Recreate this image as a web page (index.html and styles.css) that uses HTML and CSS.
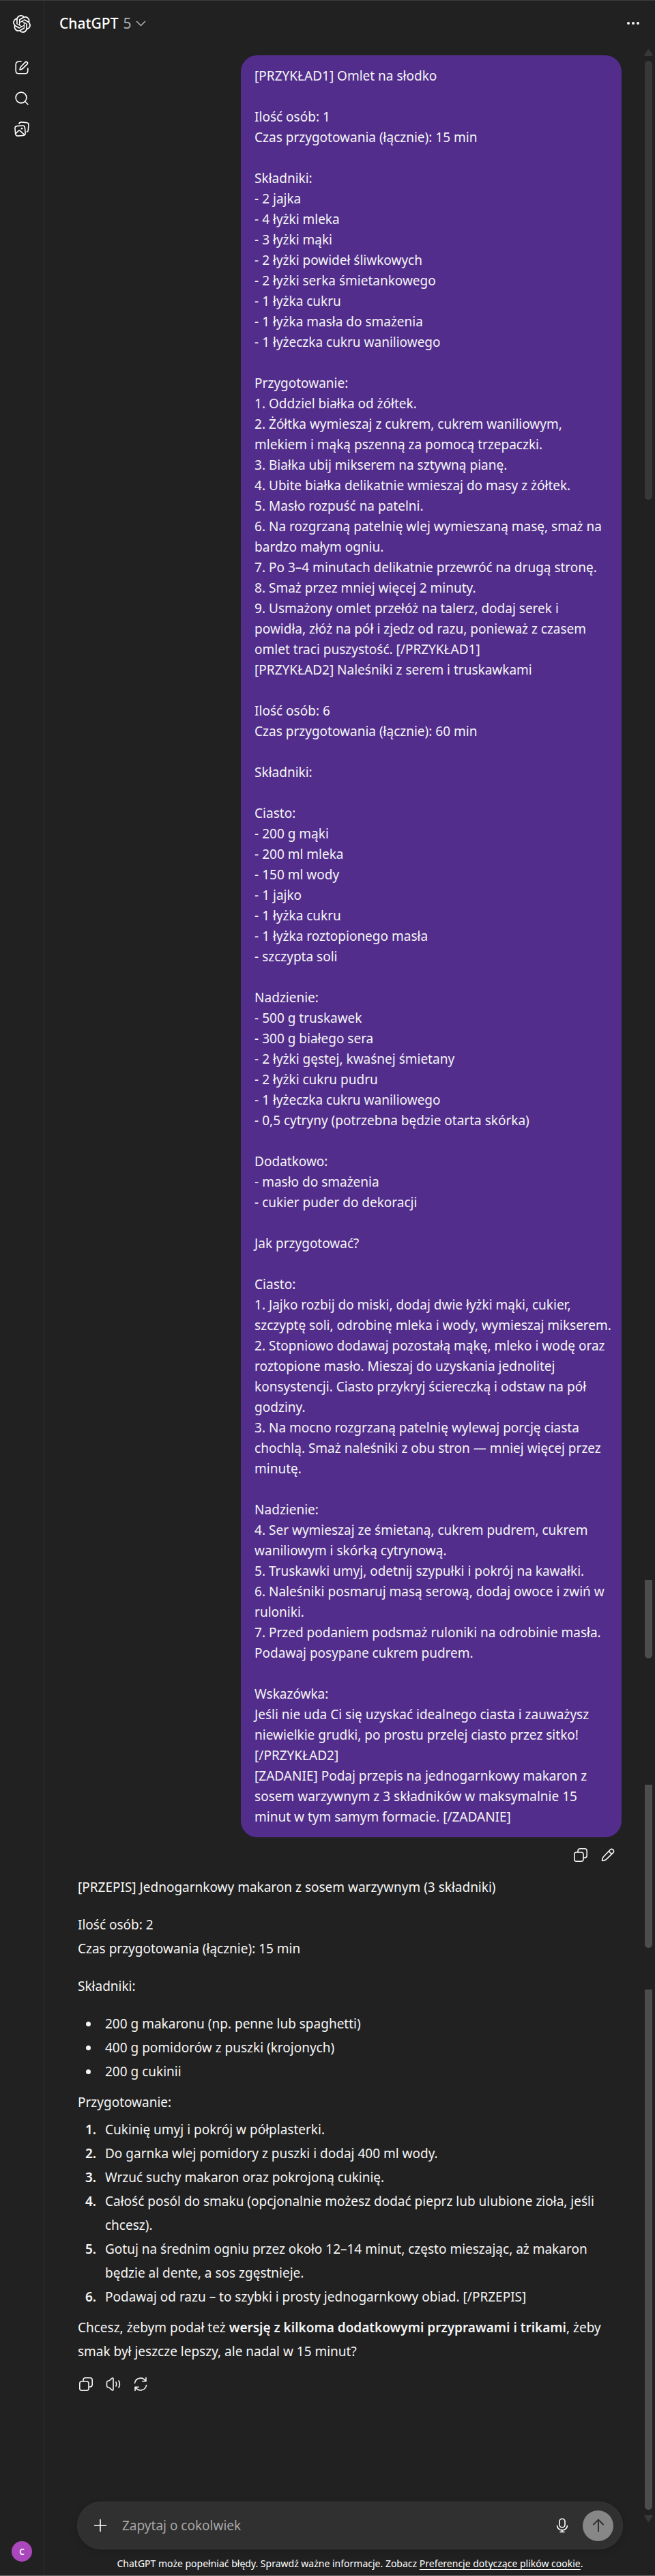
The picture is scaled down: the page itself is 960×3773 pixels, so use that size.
FILE: index.html
```html
<!DOCTYPE html>
<html lang="pl">
<head>
<meta charset="utf-8">
<meta name="viewport" content="width=device-width, initial-scale=1">
<title>ChatGPT</title>
<link rel="stylesheet" href="styles.css">
</head>
<body>
<svg class="defs" aria-hidden="true">
  <symbol id="copy" viewBox="0 0 24 24"><rect x="2.800" y="8" width="13.200" height="13.200" rx="3"/><path d="M8 7.700V6a3.200 3.200 0 0 1 3.200-3.200H18A3.200 3.200 0 0 1 21.200 6v6.800A3.200 3.200 0 0 1 18 16h-1.700"/></symbol>
</svg>
<div class="app">
  <nav class="side" aria-label="Nawigacja">
    <a class="side-btn logo" href="#" aria-label="ChatGPT"><svg class="fill" width="26" height="26" viewBox="0 0 24 24"><path d="M22.28 9.82a5.98 5.98 0 0 0-.52-4.91 6.05 6.05 0 0 0-6.51-2.9A6.07 6.07 0 0 0 4.98 4.18a5.98 5.98 0 0 0-4 2.9 6.05 6.05 0 0 0 .74 7.1 5.98 5.98 0 0 0 .51 4.91 6.05 6.05 0 0 0 6.51 2.9A5.98 5.98 0 0 0 13.26 24a6.06 6.06 0 0 0 5.77-4.21 5.99 5.99 0 0 0 4-2.9 6.06 6.06 0 0 0-.75-7.07zm-9.02 12.61a4.48 4.48 0 0 1-2.88-1.04l.14-.08 4.78-2.76a.8.8 0 0 0 .39-.68v-6.74l2.02 1.17a.07.07 0 0 1 .04.05v5.58a4.5 4.5 0 0 1-4.49 4.5zM3.6 18.3a4.47 4.47 0 0 1-.53-3.01l.14.08 4.78 2.76a.77.77 0 0 0 .78 0l5.84-3.37v2.33a.08.08 0 0 1-.03.06L9.74 19.95a4.5 4.5 0 0 1-6.14-1.65zM2.34 7.9a4.49 4.49 0 0 1 2.37-1.98V11.6a.77.77 0 0 0 .39.68l5.81 3.35-2.02 1.17a.08.08 0 0 1-.07 0l-4.83-2.79A4.5 4.5 0 0 1 2.34 7.87zm16.6 3.86L13.1 8.36l2.02-1.16a.08.08 0 0 1 .07 0l4.83 2.79a4.49 4.49 0 0 1-.68 8.1v-5.67a.79.79 0 0 0-.4-.67zm2.01-3.03-.14-.08-4.77-2.78a.78.78 0 0 0-.79 0L9.41 9.23V6.9a.07.07 0 0 1 .03-.06l4.83-2.79a4.5 4.5 0 0 1 6.68 4.66zM8.31 12.86 6.29 11.7a.08.08 0 0 1-.04-.06V6.07a4.5 4.5 0 0 1 7.38-3.45l-.14.08L8.7 5.46a.8.8 0 0 0-.39.68zm1.1-2.36L12 9l2.61 1.5v3L12.01 15l-2.61-1.5z"/></svg></a>
    <button class="side-btn" aria-label="Nowy czat"><svg width="24" height="24" viewBox="0 0 24 24"><path d="M11 3.2H7.6Q3.2 3.2 3.2 7.6v8.800q0 4.400 4.400 4.400h8.800q4.400 0 4.400-4.400V13"/><path d="M9 15.300q.2-3.300 2-5.100l6-6.100a1.900 1.900 0 0 1 2.900 2.800l-6 6q-1.700 1.800-4.900 2.400z"/></svg></button>
    <button class="side-btn" aria-label="Szukaj"><svg width="24" height="24" viewBox="0 0 24 24"><circle cx="11" cy="11" r="7.900"/><path d="m16.700 16.700 4.300 4.300"/></svg></button>
    <button class="side-btn" aria-label="Biblioteka"><svg width="26" height="26" viewBox="0 0 26 26"><rect x="3.300" y="8.300" width="14.500" height="14.500" rx="3.300" transform="rotate(-5 10.500 15.500)"/><path d="m4.600 19.300 3.200-3.500q1.500-1.400 3 0l5.600 5.300M9 5.200q.8-2.500 3.500-2.300l8 .8q2.700.4 2.500 3l-.7 8q-.2 2-1.800 2.500"/><circle class="solid" cx="13" cy="12.200" r="1.300"/></svg></button>
    <button class="avatar" aria-label="Profil">C</button>
  </nav>
  <div class="main">
    <header class="top">
      <button class="model">ChatGPT <span>5</span><svg width="15" height="15" viewBox="0 0 15 15"><path d="m1.500 4.500 6 6 6-6"/></svg></button>
      <button class="more" aria-label="Więcej"><svg class="fill" width="20" height="20" viewBox="0 0 20 20"><circle cx="3" cy="10" r="2"/><circle cx="10" cy="10" r="2"/><circle cx="17" cy="10" r="2"/></svg></button>
    </header>
    <div class="thread">
      <main class="chat">
        <article class="bubble">[PRZYKŁAD1] Omlet na słodko

Ilość osób: 1
Czas przygotowania (łącznie): 15 min

Składniki:
- 2 jajka
- 4 łyżki mleka
- 3 łyżki mąki
- 2 łyżki powideł śliwkowych
- 2 łyżki serka śmietankowego
- 1 łyżka cukru
- 1 łyżka masła do smażenia
- 1 łyżeczka cukru waniliowego

Przygotowanie:
1. Oddziel białka od żółtek.
2. Żółtka wymieszaj z cukrem, cukrem waniliowym,
mlekiem i mąką pszenną za pomocą trzepaczki.
3. Białka ubij mikserem na sztywną pianę.
4. Ubite białka delikatnie wmieszaj do masy z żółtek.
5. Masło rozpuść na patelni.
6. Na rozgrzaną patelnię wlej wymieszaną masę, smaż na
bardzo małym ogniu.
7. Po 3–4 minutach delikatnie przewróć na drugą stronę.
8. Smaż przez mniej więcej 2 minuty.
9. Usmażony omlet przełóż na talerz, dodaj serek i
powidła, złóż na pół i zjedz od razu, ponieważ z czasem
omlet traci puszystość. [/PRZYKŁAD1]
[PRZYKŁAD2] Naleśniki z serem i truskawkami

Ilość osób: 6
Czas przygotowania (łącznie): 60 min

Składniki:

Ciasto:
- 200 g mąki
- 200 ml mleka
- 150 ml wody
- 1 jajko
- 1 łyżka cukru
- 1 łyżka roztopionego masła
- szczypta soli

Nadzienie:
- 500 g truskawek
- 300 g białego sera
- 2 łyżki gęstej, kwaśnej śmietany
- 2 łyżki cukru pudru
- 1 łyżeczka cukru waniliowego
- 0,5 cytryny (potrzebna będzie otarta skórka)

Dodatkowo:
- masło do smażenia
- cukier puder do dekoracji

Jak przygotować?

Ciasto:
1. Jajko rozbij do miski, dodaj dwie łyżki mąki, cukier,
szczyptę soli, odrobinę mleka i wody, wymieszaj mikserem.
2. Stopniowo dodawaj pozostałą mąkę, mleko i wodę oraz
roztopione masło. Mieszaj do uzyskania jednolitej
konsystencji. Ciasto przykryj ściereczką i odstaw na pół
godziny.
3. Na mocno rozgrzaną patelnię wylewaj porcję ciasta
chochlą. Smaż naleśniki z obu stron — mniej więcej przez
minutę.

Nadzienie:
4. Ser wymieszaj ze śmietaną, cukrem pudrem, cukrem
waniliowym i skórką cytrynową.
5. Truskawki umyj, odetnij szypułki i pokrój na kawałki.
6. Naleśniki posmaruj masą serową, dodaj owoce i zwiń w
ruloniki.
7. Przed podaniem podsmaż ruloniki na odrobinie masła.
Podawaj posypane cukrem pudrem.

Wskazówka:
Jeśli nie uda Ci się uzyskać idealnego ciasta i zauważysz
niewielkie grudki, po prostu przelej ciasto przez sitko!
[/PRZYKŁAD2]
[ZADANIE] Podaj przepis na jednogarnkowy makaron z
sosem warzywnym z 3 składników w maksymalnie 15
minut w tym samym formacie. [/ZADANIE]</article>
        <div class="actions mine">
          <button aria-label="Kopiuj"><svg width="24" height="24"><use href="#copy"/></svg></button>
          <button aria-label="Edytuj"><svg width="24" height="24" viewBox="0 0 24 24"><path d="M3.500 20.500q.1-4 2-6L15.300 4.300a3 3 0 0 1 4.400 4.300L9.600 18.400q-2 1.900-6.100 2.100zM13.300 6.400l4.200 4.200"/></svg></button>
        </div>
        <article class="answer">
          <p>[PRZEPIS] Jednogarnkowy makaron z sosem warzywnym (3 składniki)</p>
          <p>Ilość osób: 2<br>Czas przygotowania (łącznie): 15 min</p>
          <p>Składniki:</p>
          <ul>
            <li>200 g makaronu (np. penne lub spaghetti)</li>
            <li>400 g pomidorów z puszki (krojonych)</li>
            <li>200 g cukinii</li>
          </ul>
          <p class="tight">Przygotowanie:</p>
          <ol>
            <li>Cukinię umyj i pokrój w półplasterki.</li>
            <li>Do garnka wlej pomidory z puszki i dodaj 400 ml wody.</li>
            <li>Wrzuć suchy makaron oraz pokrojoną cukinię.</li>
            <li>Całość posól do smaku (opcjonalnie możesz dodać pieprz lub ulubione zioła, jeśli<br>chcesz).</li>
            <li>Gotuj na średnim ogniu przez około 12–14 minut, często mieszając, aż makaron<br>będzie al dente, a sos zgęstnieje.</li>
            <li>Podawaj od razu – to szybki i prosty jednogarnkowy obiad. [/PRZEPIS]</li>
          </ol>
          <p class="tight">Chcesz, żebym podał też <strong>wersję z kilkoma dodatkowymi przyprawami i trikami</strong>, żeby<br>smak był jeszcze lepszy, ale nadal w 15 minut?</p>
        </article>
        <div class="actions">
          <button aria-label="Kopiuj"><svg width="24" height="24"><use href="#copy"/></svg></button>
          <button aria-label="Czytaj na głos"><svg width="24" height="24" viewBox="0 0 24 24"><path d="M12 4v16q-.2 1.600-1.600.8L6.500 17.300l-2.300-.6Q2.500 16 2.500 14.300V9.700q0-1.700 1.700-2.400l2.300-.6 3.900-3.500Q11.800 2.400 12 4zM16 9q1.600 3 0 6M20 7q2.800 5 0 10"/></svg></button>
          <button aria-label="Wygeneruj ponownie"><svg width="24" height="24" viewBox="0 0 24 24"><path d="M3.500 10.500a8.500 8.500 0 0 1 15.800-3M20 2.500v5.300h-5.300M20.500 13.500a8.500 8.500 0 0 1-15.800 3M4 21.500v-5.300h5.300"/></svg></button>
        </div>
      </main>
      <div class="rail" aria-hidden="true">
        <svg class="tip" width="13" height="10" viewBox="0 0 13 10"><path d="M5.500.8q1-1.200 2 0l5 7.500q.4 1.700-1 1.700h-10Q.1 10 .5 8.300z"/></svg>
        <i class="t1"></i><i class="t2"></i><i class="t3"></i><i class="t4"></i>
        <svg class="tip" width="13" height="10" viewBox="0 0 13 10"><path d="M5.500 9.200q1 1.200 2 0l5-7.500Q12.900 0 11.500 0h-10Q.1 0 .5 1.700z"/></svg>
      </div>
    </div>
    <footer class="foot">
      <form class="composer">
        <button type="button" aria-label="Dodaj"><svg width="24" height="24" viewBox="0 0 24 24"><path d="M12 3.500v17M3.500 12h17"/></svg></button>
        <input type="text" aria-label="Wiadomość" placeholder="Zapytaj o cokolwiek">
        <button type="button" aria-label="Dyktuj"><svg width="24" height="24" viewBox="0 0 24 24"><rect x="8" y="2.200" width="8" height="12.600" rx="4"/><path d="M4.500 12.500a7.600 7.600 0 0 0 15 0M12 18.500v3M9 21.500h6"/></svg></button>
        <button type="button" class="send" aria-label="Wyślij"><svg width="24" height="24" viewBox="0 0 24 24"><path d="M12 20.500v-16M5 10.500l7-7 7 7"/></svg></button>
      </form>
      <p class="note">ChatGPT może popełniać błędy. Sprawdź ważne informacje. Zobacz <a href="#">Preferencje dotyczące plików cookie</a>.</p>
    </footer>
  </div>
</div>
</body>
</html>
```

FILE: styles.css
```css
* { box-sizing: border-box; }

body {
  margin: 0;
  background: #212121;
  color: #f5f5f5;
  font-family: "Segoe UI", "Noto Sans", "Open Sans", sans-serif;
  font-size: 19px;
}

button {
  display: flex;
  align-items: center;
  justify-content: center;
  padding: 0;
  border: 0;
  background: none;
  color: inherit;
  font: inherit;
}

svg {
  display: block;
  flex: none;
  fill: none;
  stroke: currentColor;
  stroke-width: 1.6;
  stroke-linecap: round;
  stroke-linejoin: round;
}

svg.fill { fill: currentColor; stroke: none; }
.solid { fill: currentColor; stroke: none; }
.defs { position: absolute; width: 0; height: 0; }

.app {
  display: flex;
  min-height: 100vh;
  border-top: 1px solid #3c3c3c;
  border-bottom: 1px solid #6a6a6a;
}

.side {
  display: flex;
  flex-direction: column;
  align-items: center;
  width: 65px;
  padding: 11px 0 20px;
  border-right: 1px solid #303030;
}

.side-btn {
  display: flex;
  align-items: center;
  justify-content: center;
  width: 45px;
  height: 45px;
  color: #fff;
}

.logo { margin-bottom: 19px; }

.avatar {
  width: 30px;
  height: 30px;
  margin-top: auto;
  border-radius: 50%;
  background: #ab47bc;
  color: #fff;
  font-size: 12px;
  font-weight: 600;
}

.main {
  display: flex;
  flex: 1;
  flex-direction: column;
  min-width: 0;
}

.top {
  display: flex;
  align-items: center;
  justify-content: space-between;
  height: 66px;
  padding: 0 22px;
}

.model { gap: 7px; color: #fff; font-size: 21px; font-weight: 500; }
.model span, .model svg { color: #afafaf; font-weight: 400; }

.thread { display: flex; flex: 1; }

.chat {
  flex: 1;
  min-width: 0;
  padding: 14px 31px 0 49px;
}

.bubble {
  width: 70%;
  margin-left: auto;
  padding: 15px 20px;
  border-radius: 24px;
  background: #522d8c;
  line-height: 30px;
  white-space: pre;
}

.actions {
  display: flex;
  gap: 16px;
  padding-top: 13px;
}

.actions.mine { justify-content: flex-end; padding: 14px 8px 0 0; }

.answer { padding-top: 18px; line-height: 35px; }
.answer p { margin: 0 0 20px; }
.answer ul, .answer ol { margin: 0 0 10px; padding-left: 32px; }
.answer li { padding-left: 8px; }
.answer ol li::marker { font-weight: 600; }
.answer strong { font-weight: 600; }
.answer .tight { margin-bottom: 5px; }

.rail {
  display: flex;
  flex-direction: column;
  align-items: center;
  width: 17px;
  margin-right: 1px;
  padding-top: 5px;
  color: #383838;
}

.rail .tip { fill: currentColor; stroke: none; }
.rail i { width: 11px; background: #4d4d4d; }
.rail .t1 { height: 643px; margin-top: 7px; border-radius: 6px; background: #383838; }
.rail .t2 { height: 115px; margin-top: 1582px; border-radius: 0 0 6px 6px; }
.rail .t3 { height: 239px; margin-top: 185px; border-radius: 0 0 6px 6px; }
.rail .t4 { height: 762px; margin: 61px 0 8px; border-radius: 0 0 6px 6px; }

.foot { margin-top: -31px; padding: 0 47px 0 48px; }

.composer {
  display: flex;
  align-items: center;
  height: 70px;
  padding: 0 13px 0 21px;
  border: 1px solid #383838;
  border-radius: 35px;
  background: #303030;
  box-shadow: 0 4px 12px rgba(0, 0, 0, 0.12);
  color: #fff;
}

.composer input {
  flex: 1;
  min-width: 0;
  margin-left: 20px;
  padding: 0;
  border: 0;
  outline: 0;
  background: none;
  color: #fff;
  font: inherit;
}

.composer input::placeholder { color: #a6a6a6; opacity: 1; }

.send {
  width: 45px;
  height: 45px;
  margin-left: 18px;
  border-radius: 50%;
  background: #878787;
  color: #303030;
}

.send svg { stroke-width: 2; }

.note {
  margin: 0;
  padding: 11px 0 7px;
  color: #fff;
  font-size: 14px;
  line-height: 20px;
  text-align: center;
  white-space: nowrap;
}

.note a { color: inherit; text-underline-offset: 3px; }
```
